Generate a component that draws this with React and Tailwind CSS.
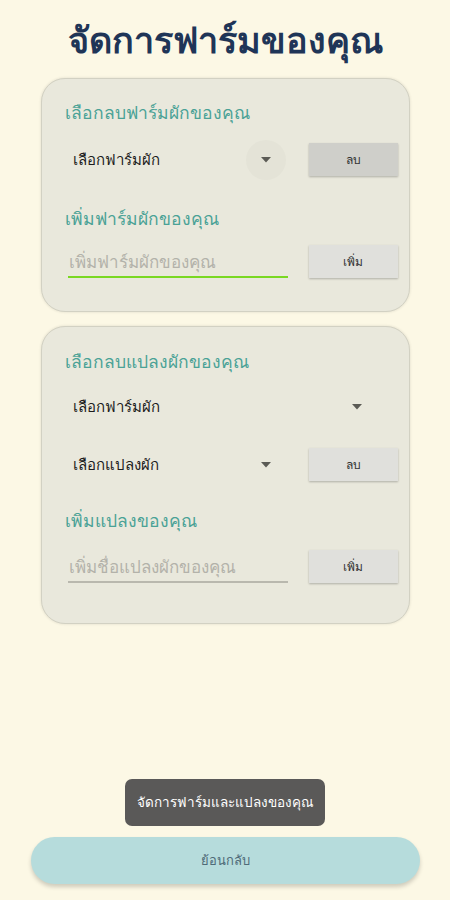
const font = { fontFamily: '"Noto Sans", "Noto Sans CJK SC", sans-serif' };

function Caret() {
  return (
    <svg width="10" height="6" viewBox="0 0 10 6" className="shrink-0">
      <path d="M0 0h10L5 5.5z" fill="#5b5b55" />
    </svg>
  );
}

function GrayButton({ label, dark = false }) {
  return (
    <button
      className={`w-[89px] h-[33px] text-[12px] text-[#333] shadow-[0_1px_2px_rgba(0,0,0,0.25)] ${
        dark ? 'bg-[#cfcfca]' : 'bg-[#e0e0dc]'
      }`}
    >
      {label}
    </button>
  );
}

function Dropdown({ label, width = 'w-[222px]', ripple = false }) {
  return (
    <div className={`flex items-center justify-between h-[33px] ${width} pl-[8px] pr-[16px]`}>
      <span className="text-[15px] text-[#1d1d1d]">{label}</span>
      <div className="relative flex items-center justify-center">
        {ripple && (
          <div className="absolute w-[40px] h-[40px] rounded-full bg-[#e4e3d7]" />
        )}
        <div className="relative">
          <Caret />
        </div>
      </div>
    </div>
  );
}

function InputRow({ placeholder, active = false }) {
  return (
    <div className="flex items-end justify-between pl-[3px] pr-[11px]">
      <div
        className={`w-[220px] h-[31px] flex items-center border-b-2 ${
          active ? 'border-[#7ad822]' : 'border-[#b9b8ae]'
        }`}
      >
        <span className="pl-[1px] text-[17px] leading-[24px] text-[#b3b2aa]">{placeholder}</span>
      </div>
      <GrayButton label="เพิ่ม" />
    </div>
  );
}

function Label({ children }) {
  return <div className="text-[17.5px] leading-[24px] text-[#4aa296]">{children}</div>;
}

export default function App() {
  return (
    <div
      className="w-[450px] h-[900px] bg-[#fcf8e5] flex flex-col items-center overflow-hidden"
      style={font}
    >
      <h1 className="mt-[16px] text-[36px] font-bold text-[#1f3557] leading-[48px]">
        จัดการฟาร์มของคุณ
      </h1>

      <div className="mt-[14px] w-[369px] h-[234px] rounded-[24px] bg-[#e9e8dc] border border-[#d2d1c3] shadow-[0_0_3px_rgba(0,0,0,0.12)] pl-[23px] pt-[21px]">
        <Label>เลือกลบฟาร์มผักของคุณ</Label>
        <div className="mt-[19px] flex items-center justify-between pr-[11px]">
          <Dropdown label="เลือกฟาร์มผัก" ripple />
          <GrayButton label="ลบ" dark />
        </div>
        <div className="mt-[30px]">
          <Label>เพิ่มฟาร์มผักของคุณ</Label>
        </div>
        <div className="mt-[15px]">
          <InputRow placeholder="เพิ่มฟาร์มผักของคุณ" active />
        </div>
      </div>

      <div className="mt-[14px] w-[369px] h-[298px] rounded-[24px] bg-[#e9e8dc] border border-[#d2d1c3] shadow-[0_0_3px_rgba(0,0,0,0.12)] pl-[23px] pt-[22px]">
        <Label>เลือกลบแปลงผักของคุณ</Label>
        <div className="mt-[17px] flex items-center pr-[11px]">
          <Dropdown label="เลือกฟาร์มผัก" width="w-[313px]" />
        </div>
        <div className="mt-[25px] flex items-center justify-between pr-[11px]">
          <Dropdown label="เลือกแปลงผัก" />
          <GrayButton label="ลบ" />
        </div>
        <div className="mt-[27px]">
          <Label>เพิ่มแปลงของคุณ</Label>
        </div>
        <div className="mt-[18px]">
          <InputRow placeholder="เพิ่มชื่อแปลงผักของคุณ" />
        </div>
      </div>

      <div className="flex-1" />

      <div className="mb-[11px] w-[200px] h-[47px] rounded-[7px] bg-[#5a5958] flex items-center justify-center text-[13.5px] text-white">
        จัดการฟาร์มและแปลงของคุณ
      </div>

      <button className="mb-[16px] w-[389px] h-[47px] rounded-full bg-[#b6dcdc] shadow-[0_3px_4px_rgba(0,0,0,0.18)] text-[13px] text-[#4f6b78]">
        ย้อนกลับ
      </button>
    </div>
  );
}
